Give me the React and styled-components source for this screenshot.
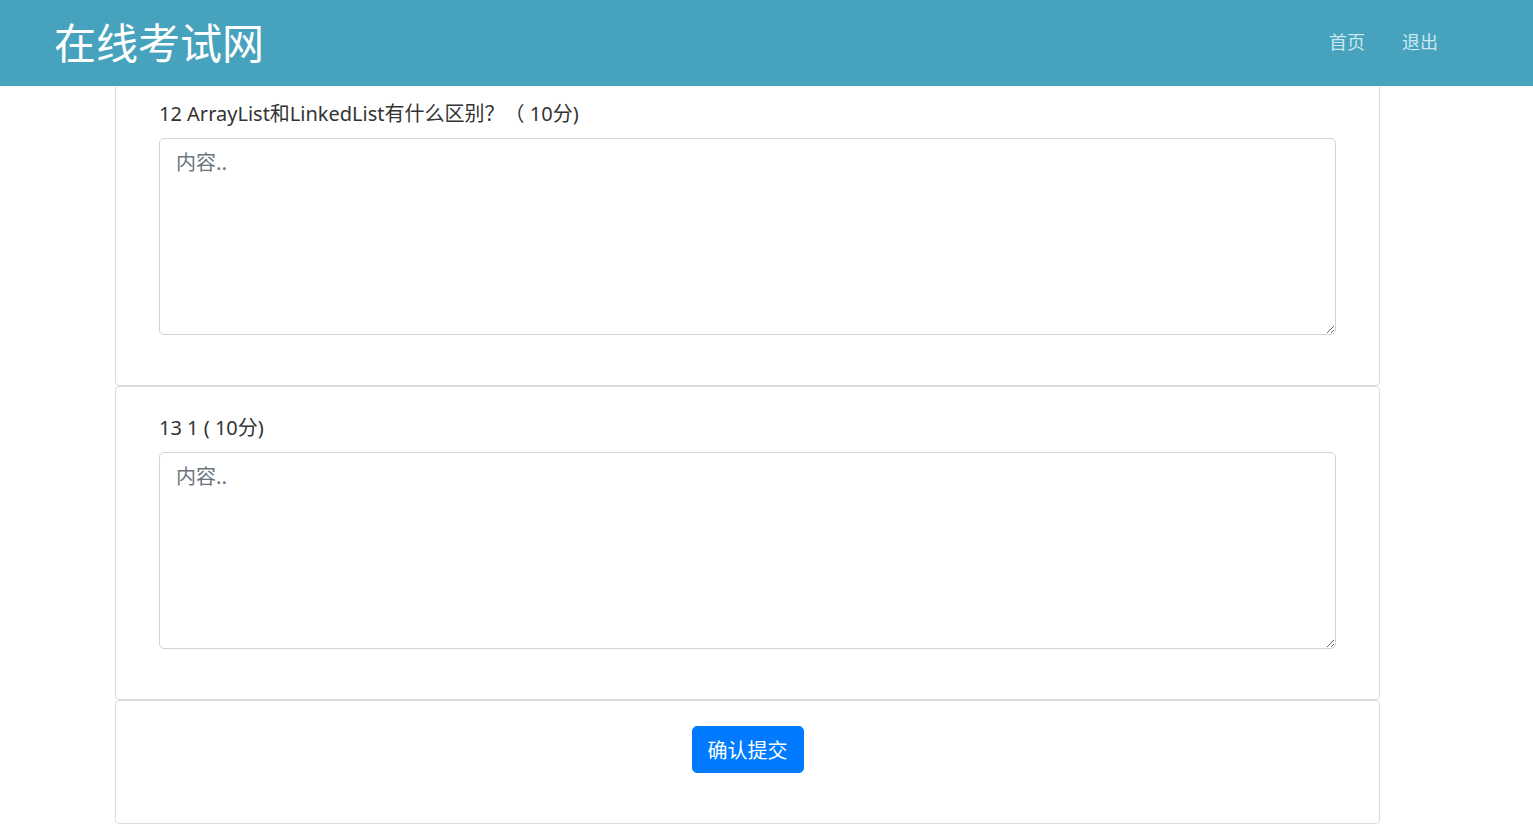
import React from 'react';
import styled, { createGlobalStyle } from 'styled-components';

const GlobalStyle = createGlobalStyle`
  body {
    margin: 0;
    background: #fff;
    font-family: "Noto Sans", "Noto Sans CJK SC", sans-serif;
    color: #212529;
  }
`;

const questions = [
  { no: 12, title: 'ArrayList和LinkedList有什么区别？（ 10分)' },
  { no: 13, title: '1 ( 10分)' },
];

export default function App() {
  return (
    <>
      <GlobalStyle />
      <Header>
        <Brand>在线考试网</Brand>
        <Nav>
          <NavLink href="#">首页</NavLink>
          <NavLink href="#">退出</NavLink>
        </Nav>
      </Header>
      <Main>
        {questions.map((q) => (
          <Card key={q.no}>
            <Label>
              {q.no} {q.title}
            </Label>
            <Answer placeholder="内容.." />
          </Card>
        ))}
        <Card $center>
          <SubmitButton type="button">确认提交</SubmitButton>
        </Card>
      </Main>
    </>
  );
}

const Header = styled.header`
  position: fixed;
  top: 0;
  left: 0;
  right: 0;
  z-index: 10;
  box-sizing: border-box;
  height: 86px;
  background: #47a3bd;
  display: flex;
  align-items: center;
  justify-content: space-between;
  padding: 0 95px 4px 54px;
`;

const Brand = styled.div`
  color: #fff;
  font-size: 42px;
  line-height: 1;
  font-family: "Noto Sans CJK SC", sans-serif;
`;

const Nav = styled.nav`
  display: flex;
  gap: 37px;
`;

const NavLink = styled.a`
  color: #c9e8f1;
  font-size: 18px;
  text-decoration: none;
  font-family: "Noto Sans CJK SC", sans-serif;
`;

const Main = styled.main`
  width: 1265px;
  margin-left: 115px;
  padding-top: 72px;
  display: flex;
  flex-direction: column;
`;

const Card = styled.section`
  box-sizing: border-box;
  border: 1px solid #dcdcdc;
  border-radius: 4px;
  display: flex;
  flex-direction: column;
  align-items: ${(p) => (p.$center ? 'center' : 'stretch')};
  padding: ${(p) => (p.$center ? '25px 0 50px' : '26px 43px 50px')};
`;

const Label = styled.div`
  font-size: 20px;
  line-height: 30px;
  color: #333;
  margin-bottom: 9px;
`;

const Answer = styled.textarea`
  box-sizing: border-box;
  height: 197px;
  width: 100%;
  border: 1px solid #ced4da;
  border-radius: 5px;
  padding: 8px 16px;
  font-size: 20px;
  line-height: 30px;
  font-family: "Noto Sans CJK SC", sans-serif;
  resize: vertical;
  outline: none;
  &::placeholder {
    color: #6c757d;
  }
`;

const SubmitButton = styled.button`
  background: #007bff;
  color: #fff;
  border: 1px solid #007bff;
  border-radius: 5px;
  height: 47px;
  padding: 0 15px;
  font-size: 20px;
  font-family: "Noto Sans CJK SC", sans-serif;
  cursor: pointer;
`;
